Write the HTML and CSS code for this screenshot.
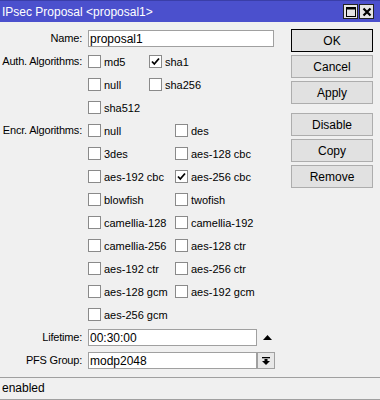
FILE: index.html
```html
<!DOCTYPE html>
<html>
<head>
<meta charset="utf-8">
<link rel="stylesheet" href="styles.css">
</head>
<body>
<div class="window">
  <div class="titlebar">
    <span class="title">IPsec Proposal &lt;proposal1&gt;</span>
    <div class="tb-btns">
      <span class="tb-btn"><svg width="10" height="10" viewBox="0 0 10 10"><rect x="0.5" y="0.5" width="9" height="9" fill="none" stroke="#000" stroke-width="1"/><line x1="0" y1="1.5" x2="10" y2="1.5" stroke="#000" stroke-width="2"/></svg></span>
      <span class="tb-btn"><svg width="10" height="10" viewBox="0 0 10 10"><path d="M1.5 1.5 L8.5 8.5 M8.5 1.5 L1.5 8.5" stroke="#000" stroke-width="2.2"/></svg></span>
    </div>
  </div>
  <div class="main">
    <div class="form">
      <div class="lbl">Name:</div>
      <div class="field"><input class="txt wide" type="text" value="proposal1"></div>

      <div class="lbl">Auth. Algorithms:</div>
      <div class="checks auth">
        <label class="chk"><span class="box"></span>md5</label>
        <label class="chk"><span class="box on"><svg width="11" height="11" viewBox="0 0 11 11"><path d="M2 5.5 L4.3 8 L9 2.5" fill="none" stroke="#000" stroke-width="1.8"/></svg></span>sha1</label>
        <label class="chk"><span class="box"></span>null</label>
        <label class="chk"><span class="box"></span>sha256</label>
        <label class="chk"><span class="box"></span>sha512</label>
      </div>

      <div class="lbl">Encr. Algorithms:</div>
      <div class="checks encr">
        <label class="chk"><span class="box"></span>null</label>
        <label class="chk"><span class="box"></span>des</label>
        <label class="chk"><span class="box"></span>3des</label>
        <label class="chk"><span class="box"></span>aes-128 cbc</label>
        <label class="chk"><span class="box"></span>aes-192 cbc</label>
        <label class="chk"><span class="box on"><svg width="11" height="11" viewBox="0 0 11 11"><path d="M2 5.5 L4.3 8 L9 2.5" fill="none" stroke="#000" stroke-width="1.8"/></svg></span>aes-256 cbc</label>
        <label class="chk"><span class="box"></span>blowfish</label>
        <label class="chk"><span class="box"></span>twofish</label>
        <label class="chk"><span class="box"></span>camellia-128</label>
        <label class="chk"><span class="box"></span>camellia-192</label>
        <label class="chk"><span class="box"></span>camellia-256</label>
        <label class="chk"><span class="box"></span>aes-128 ctr</label>
        <label class="chk"><span class="box"></span>aes-192 ctr</label>
        <label class="chk"><span class="box"></span>aes-256 ctr</label>
        <label class="chk"><span class="box"></span>aes-128 gcm</label>
        <label class="chk"><span class="box"></span>aes-192 gcm</label>
        <label class="chk"><span class="box"></span>aes-256 gcm</label>
      </div>

      <div class="lbl">Lifetime:</div>
      <div class="field">
        <input class="txt" type="text" value="00:30:00">
        <svg class="up" width="9" height="5" viewBox="0 0 9 5"><polygon points="0,5 9,5 4.5,0" fill="#000"/></svg>
      </div>

      <div class="lbl">PFS Group:</div>
      <div class="field">
        <input class="txt" type="text" value="modp2048">
        <span class="drop"><svg width="8" height="8" viewBox="0 0 8 8"><rect x="0" y="0" width="8" height="1.3" fill="#000"/><rect x="2.5" y="2" width="3" height="2.5" fill="#000"/><polygon points="0,4 8,4 4,8" fill="#000"/></svg></span>
      </div>
    </div>
    <div class="actions">
      <button class="btn default">OK</button>
      <button class="btn">Cancel</button>
      <button class="btn">Apply</button>
      <button class="btn sep">Disable</button>
      <button class="btn">Copy</button>
      <button class="btn">Remove</button>
    </div>
  </div>
  <div class="status">enabled</div>
</div>
</body>
</html>
```

FILE: styles.css
```css
* { box-sizing: border-box; }
html, body {
  margin: 0;
  padding: 0;
  background: #f0f0f0;
}
body {
  font-family: "Liberation Sans", Arial, sans-serif;
  font-size: 11px;
  color: #000;
}
.window {
  width: 380px;
  height: 400px;
  display: flex;
  flex-direction: column;
  overflow: hidden;
}
.titlebar {
  height: 22px;
  flex: 0 0 22px;
  background: #4b50cd;
  border-top: 1px solid #3a3ea8;
  display: flex;
  align-items: center;
  justify-content: space-between;
  padding: 0 6px 0 2px;
}
.title {
  color: #fff;
  font-size: 12px;
}
.tb-btns {
  display: flex;
  gap: 1px;
}
.tb-btn {
  width: 15px;
  height: 15px;
  background: #e4e4e4;
  border: 1px solid #222;
  display: flex;
  align-items: center;
  justify-content: center;
}
.main {
  flex: 1;
  display: flex;
}
.form {
  width: 291px;
  padding-top: 5px;
  display: grid;
  grid-template-columns: 82px 1fr;
  column-gap: 6px;
  grid-auto-rows: min-content;
  align-content: start;
}
.lbl {
  height: 23px;
  line-height: 23px;
  text-align: right;
  white-space: nowrap;
  letter-spacing: -0.2px;
}
.field {
  height: 23px;
  display: flex;
  align-items: center;
}
.txt {
  height: 17px;
  width: 169px;
  border: 1px solid #a0a0a0;
  background: #fff;
  font: inherit;
  font-size: 12px;
  color: #000;
  padding: 0 1px;
  margin: 0;
  outline: none;
}
.txt.wide { width: 186px; }
.up { margin-left: 6px; }
.drop {
  width: 18px;
  height: 17px;
  border: 1px solid #a0a0a0;
  background: #e8e8e8;
  display: flex;
  align-items: center;
  justify-content: center;
}
.checks {
  display: grid;
  grid-auto-rows: 23px;
}
.checks.auth { grid-template-columns: 61px auto; }
.checks.encr { grid-template-columns: 87px auto; }
.chk {
  display: flex;
  align-items: center;
  gap: 3px;
  white-space: nowrap;
  font-size: 11px;
}
.box {
  width: 13px;
  height: 13px;
  flex: 0 0 13px;
  border: 1px solid #8a8a8a;
  background: #fff;
  display: flex;
  align-items: center;
  justify-content: center;
}
.actions {
  width: 82px;
  padding-top: 7px;
  display: flex;
  flex-direction: column;
  gap: 3px;
}
.btn {
  height: 23px;
  width: 82px;
  margin: 0;
  padding: 0;
  background: #e1e1e1;
  border: 1px solid #adadad;
  font: inherit;
  font-size: 12px;
  color: #000;
}
.btn.default { border-color: #000; }
.btn.sep { margin-top: 6px; }
.status {
  height: 23px;
  flex: 0 0 23px;
  border-top: 1px solid #a0a0a0;
  border-bottom: 1px solid #a0a0a0;
  line-height: 21px;
  padding-left: 2px;
  font-size: 12px;
}
```
